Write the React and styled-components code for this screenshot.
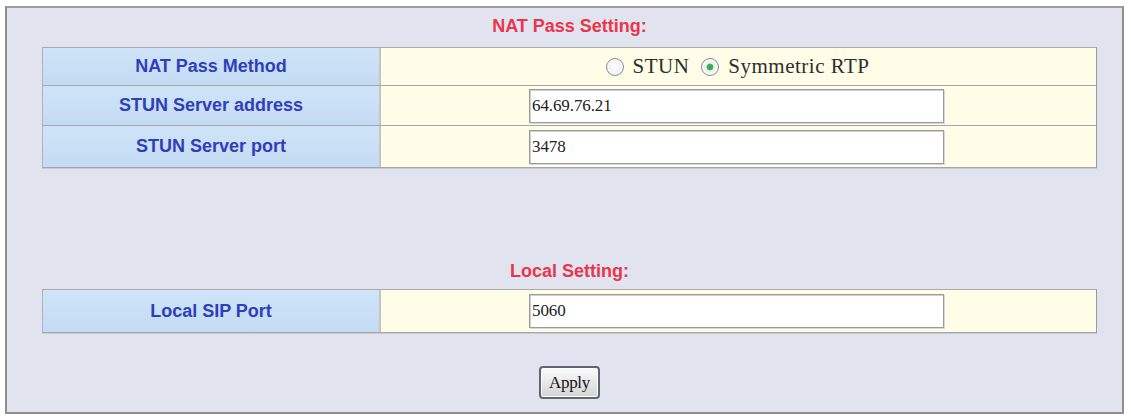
import styled, { createGlobalStyle } from "styled-components";

const GlobalStyle = createGlobalStyle`
  html, body {
    margin: 0;
    padding: 0;
    background: #ffffff;
  }
  body {
    font-family: "Liberation Sans", Arial, sans-serif;
  }
`;

const Panel = styled.div`
  box-sizing: border-box;
  width: 1119px;
  height: 408px;
  margin: 6px 0 0 5px;
  padding: 7px 25px 12px 35px;
  background: #e1e4ef;
  border: 2px solid #8e8e8e;
  border-top-color: #9c9c9c;
  display: flex;
  flex-direction: column;
  align-items: stretch;
`;

const SectionTitle = styled.div`
  font-family: "Liberation Sans", Arial, sans-serif;
  font-weight: bold;
  font-size: 18px;
  line-height: 22px;
  color: #e8364c;
  text-align: center;
  margin-top: ${(p) => p.$top || 0}px;
  margin-bottom: ${(p) => p.$bottom || 0}px;
`;

const Table = styled.div`
  display: flex;
  flex-direction: column;
  border-top: 1px solid #a9a9a9;
  border-left: 1px solid #b3b3b3;
  border-right: 1px solid #9a9a9a;
  box-shadow: 0 1px 0 #c9ccd6;
`;

const Row = styled.div`
  display: grid;
  grid-template-columns: 338px 1fr;
  height: ${(p) => p.$h}px;
  border-bottom: 1px solid #a6a6a6;
`;

const LabelCell = styled.div`
  display: flex;
  align-items: center;
  justify-content: center;
  background: linear-gradient(#cfe4f8, #c3dbf3);
  border-right: 2px solid #c4c4c4;
  font-family: "Liberation Sans", Arial, sans-serif;
  font-weight: bold;
  font-size: 18px;
  color: #2f3ebb;
`;

const ValueCell = styled.div`
  display: flex;
  align-items: center;
  justify-content: ${(p) => (p.$center ? "center" : "flex-start")};
  padding-left: ${(p) => (p.$center ? 0 : 148)}px;
  background: #fffde7;
`;

const TextInput = styled.input`
  box-sizing: border-box;
  width: 415px;
  height: 34px;
  margin: 0;
  padding: 0 0 0 2px;
  background: #ffffff;
  border: 1px solid #9b9b9b;
  box-shadow: inset 1px 1px 0 #cfcfcf, 1px 1px 0 #d8d8d8;
  font-family: "Liberation Serif", "Times New Roman", serif;
  font-size: 17px;
  letter-spacing: -0.1px;
  color: #222;
  outline: none;
`;

const RadioGroup = styled.div`
  display: flex;
  align-items: center;
  margin-left: 10px;
  font-family: "Liberation Serif", "Times New Roman", serif;
  font-size: 21px;
  letter-spacing: 0.5px;
  color: #2e2e2e;
`;

const RadioLabel = styled.label`
  display: flex;
  align-items: center;
  gap: 9px;
  margin-right: 12px;
`;

const Radio = styled.input.attrs({ type: "radio" })`
  appearance: none;
  box-sizing: border-box;
  width: 18px;
  height: 18px;
  margin: 0;
  border-radius: 50%;
  border: 1px solid #8a8f96;
  background: radial-gradient(circle, #ffffff 0%, #f1f1f1 55%, #d9dbe0 100%);
  box-shadow: inset 0 0 0 2px #f7f7f7;

  &:checked {
    background: radial-gradient(
      circle,
      #2f9a4a 0%,
      #4cb463 26%,
      #e9f3ea 34%,
      #f4f4f4 60%,
      #d9dbe0 100%
    );
  }
`;

const ButtonBar = styled.div`
  display: flex;
  justify-content: center;
  margin-top: 33px;
`;

const ApplyButton = styled.button`
  box-sizing: border-box;
  width: 61px;
  height: 33px;
  padding: 0;
  border: 2px solid #5e6676;
  border-radius: 4px;
  background: linear-gradient(#fbfbfb, #e4e4e4 60%, #d4d4d4);
  box-shadow: inset 0 0 0 1px #ffffff;
  font-family: "Liberation Serif", "Times New Roman", serif;
  font-size: 17px;
  letter-spacing: -0.3px;
  color: #151515;
`;

export default function App() {
  return (
    <>
      <GlobalStyle />
      <Panel>
        <SectionTitle $bottom={10}>NAT Pass Setting:</SectionTitle>
        <Table>
          <Row $h={37}>
            <LabelCell>NAT Pass Method</LabelCell>
            <ValueCell $center>
              <RadioGroup>
                <RadioLabel>
                  <Radio name="natpass" value="stun" />
                  STUN
                </RadioLabel>
                <RadioLabel>
                  <Radio name="natpass" value="rtp" defaultChecked />
                  Symmetric RTP
                </RadioLabel>
              </RadioGroup>
            </ValueCell>
          </Row>
          <Row $h={39}>
            <LabelCell>STUN Server address</LabelCell>
            <ValueCell>
              <TextInput defaultValue="64.69.76.21" />
            </ValueCell>
          </Row>
          <Row $h={41}>
            <LabelCell>STUN Server port</LabelCell>
            <ValueCell>
              <TextInput defaultValue="3478" />
            </ValueCell>
          </Row>
        </Table>

        <SectionTitle $top={92} $bottom={7}>
          Local Setting:
        </SectionTitle>
        <Table>
          <Row $h={42}>
            <LabelCell>Local SIP Port</LabelCell>
            <ValueCell>
              <TextInput defaultValue="5060" />
            </ValueCell>
          </Row>
        </Table>

        <ButtonBar>
          <ApplyButton type="button">Apply</ApplyButton>
        </ButtonBar>
      </Panel>
    </>
  );
}
